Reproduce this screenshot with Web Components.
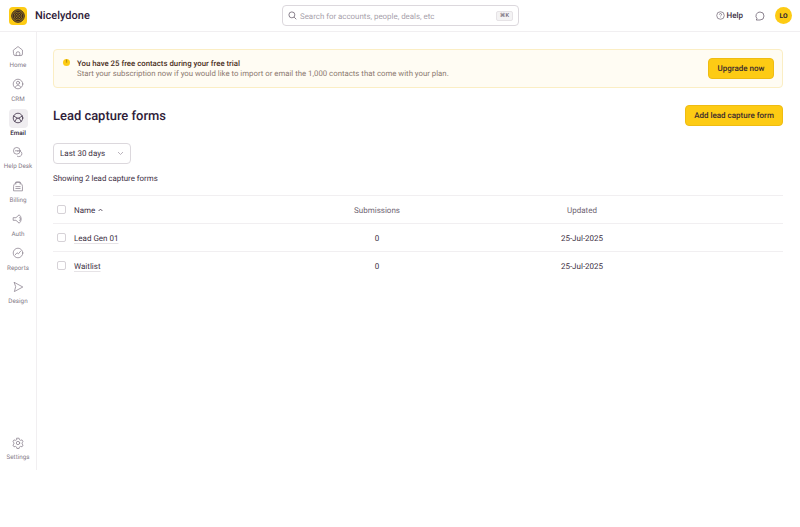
<!DOCTYPE html>
<html>
<head>
<meta charset="utf-8">
<title>Lead capture forms</title>
<style>
  html, body { margin: 0; height: 100%; background: #fff; }
  body { font-family: Roboto, "Liberation Sans", sans-serif; color: #2a1a33; text-rendering: geometricPrecision; }
  .count { margin: 8px 0 0; font-size: 7.9px; line-height: 14px; color: #3d3044; }
</style>
</head>
<body>
<app-shell>
  <top-bar slot="top"></top-bar>
  <side-nav slot="side">
    <nav-item label="Home" icon="home"></nav-item>
    <nav-item label="CRM" icon="crm"></nav-item>
    <nav-item label="Email" icon="email" active></nav-item>
    <nav-item label="Help Desk" icon="help"></nav-item>
    <nav-item label="Billing" icon="billing"></nav-item>
    <nav-item label="Auth" icon="auth"></nav-item>
    <nav-item label="Reports" icon="reports"></nav-item>
    <nav-item label="Design" icon="design"></nav-item>
    <nav-item slot="bottom" label="Settings" icon="settings"></nav-item>
  </side-nav>
  <trial-banner></trial-banner>
  <page-head></page-head>
  <range-select></range-select>
  <p class="count">Showing 2 lead capture forms</p>
  <forms-table>
    <form-row name="Lead Gen 01" count="0" updated="25-Jul-2025"></form-row>
    <form-row name="Waitlist" count="0" updated="25-Jul-2025"></form-row>
  </forms-table>
</app-shell>

<script>
const ICONS = {
  home: '<path d="M2.6 8.4 10 2.6l7.4 5.8V15a2.6 2.6 0 0 1-2.6 2.6H5.2A2.6 2.6 0 0 1 2.6 15z"/><path d="M7 17.4v-3.2a3 3 0 0 1 6 0v3.2"/>',
  crm: '<circle cx="10" cy="10" r="8"/><circle cx="10" cy="8" r="2.6"/><path d="M5.8 15.4c.6-2.4 2.2-3.2 4.2-3.2s3.6.8 4.2 3.2"/>',
  email: '<circle cx="10" cy="10" r="8"/><path d="M3 6.8 10 11l7-4.2M4.6 15.8 8.4 10M15.4 15.8 11.6 10"/>',
  help: '<circle cx="8" cy="8" r="5.6"/><path d="M9 17.2a5 5 0 1 0 .2-8.8"/><path d="M5.6 8h4.6"/>',
  billing: '<path d="M2.6 17.4V11a7.4 7.4 0 0 1 14.8 0v6.4z"/><path d="M6.4 7V3.4h7.2V7M6.4 11h7.2M6.4 14.2h7.2"/>',
  auth: '<path d="M2.6 7.8h4L12 3a9 9 0 0 1 0 14l-5.4-4.8h-4z"/><path d="M13 7a4.4 4.4 0 0 1 0 6"/>',
  reports: '<circle cx="10" cy="10" r="8"/><path d="M5.6 12.8 8.4 9.6l2.2 1.8 3.8-4.4"/>',
  design: '<path d="M4 2.4 18 10 4 17.6l2-7.6z"/>',
  settings: '<circle cx="10" cy="10" r="2.8"/><path d="M8.2 2h3.6l.5 2.4 2 1.2 2.4-.8 1.8 3.1-1.8 1.6v2.2l1.8 1.6-1.8 3.1-2.4-.8-2 1.2-.5 2.4H8.2l-.5-2.4-2-1.2-2.4.8-1.8-3.1 1.8-1.6V9.5L1.5 7.9l1.8-3.1 2.4.8 2-1.2z"/>'
};

class AppShell extends HTMLElement {
  constructor() {
    super();
    this.attachShadow({ mode: 'open' });
    this.shadowRoot.innerHTML = `
      <style>
        :host { display: block; height: 470px; }
        .wrap { display: grid; grid-template-rows: 32px 1fr; grid-template-columns: 37px 1fr; height: 100%; }
        .top { grid-column: 1 / 3; }
        main { padding: 17px 17px 0 16px; min-width: 0; }
      </style>
      <div class="wrap">
        <div class="top"><slot name="top"></slot></div>
        <slot name="side"></slot>
        <main><slot></slot></main>
      </div>
    `;
  }
}

class TopBar extends HTMLElement {
  constructor() {
    super();
    this.attachShadow({ mode: 'open' });
    this.shadowRoot.innerHTML = `
      <style>
        :host { display: grid; grid-template-columns: 273px 237px 1fr; align-items: center; height: 32px; box-sizing: border-box;
                border-bottom: 1px solid #f1eff1; padding: 0 8px 0 9px; }
        .brand { display: flex; align-items: center; gap: 8px; font-size: 11px; font-weight: 500; color: #2f2038; }
        .logo { width: 18px; height: 18px; border-radius: 4px; background: #fdcb14; display: flex; align-items: center; justify-content: center; }
        .search { height: 21px; box-sizing: border-box; border: 1px solid #dcd8dd; border-radius: 4px; display: flex; align-items: center;
                  padding: 0 5px 0 5px; gap: 3px; color: #a89fab; font-size: 7.9px; }
        .search span { flex: 1; padding-top: 1px; }
        kbd { font-family: inherit; font-size: 5.6px; font-weight: 500; line-height: 8px; color: #6f6573; background: #f4f3f4; border: 1px solid #e6e3e6; border-radius: 2px; padding: 0 3px; }
        .right { display: flex; justify-content: flex-end; align-items: center; font-size: 8px; font-weight: 500; color: #3d3044; }
        .help { display: flex; align-items: center; gap: 2px; margin-right: 12px; }
        .chat { margin-right: 10px; display: flex; }
        .avatar { width: 17px; height: 17px; border-radius: 50%; background: #fdcb14; display: flex; align-items: center; justify-content: center;
                  font-size: 6.6px; font-weight: 700; color: #2a1a33; }
        svg { fill: none; stroke: currentColor; }
      </style>
      <div class="brand">
        <div class="logo">
          <svg width="14" height="14" viewBox="0 0 14 14" style="stroke:#2a1a24">
            <circle cx="7" cy="7" r="6.3" stroke-width=".9" fill="#9a7a1e"/>
            <circle cx="7" cy="7" r="4.7" stroke-width=".9"/>
            <circle cx="7" cy="7" r="3.1" stroke-width=".9"/>
            <circle cx="7" cy="7" r="1.4" stroke-width=".9"/>
          </svg>
        </div>
        <span>Nicelydone</span>
      </div>
      <div class="search">
        <svg width="9" height="9" viewBox="0 0 10 10" stroke-width="1" style="color:#7d7480"><circle cx="4.3" cy="4.3" r="3.3"/><path d="m6.8 6.8 2.4 2.4"/></svg>
        <span>Search for accounts, people, deals, etc</span>
        <kbd>⌘K</kbd>
      </div>
      <div class="right">
        <div class="help">
          <svg width="9" height="9" viewBox="0 0 10 10" stroke-width=".8" style="color:#6f6573"><circle cx="5" cy="5" r="4.2"/><path d="M3.8 4a1.2 1.2 0 1 1 1.7 1.1c-.4.2-.5.4-.5.8M5 7.2v.3"/></svg>
          <span>Help</span>
        </div>
        <div class="chat">
          <svg width="10" height="10" viewBox="0 0 10 10" stroke-width=".8" style="color:#6f6573"><path d="M5 1a4 4 0 0 1 0 8H1.2l.8-1.3A4 4 0 0 1 5 1z"/></svg>
        </div>
        <div class="avatar">LO</div>
      </div>
    `;
  }
}

class SideNav extends HTMLElement {
  constructor() {
    super();
    this.attachShadow({ mode: 'open' });
    this.shadowRoot.innerHTML = `
      <style>
        :host { display: flex; flex-direction: column; justify-content: space-between; box-sizing: border-box; width: 37px;
                border-right: 1px solid #f1eff1; padding: 9px 0 7px; }
        div { display: flex; flex-direction: column; gap: 4px; align-items: center; }
      </style>
      <div><slot></slot></div>
      <div><slot name="bottom"></slot></div>
    `;
  }
}

class NavItem extends HTMLElement {
  constructor() {
    super();
    this.attachShadow({ mode: 'open' });
    const active = this.hasAttribute('active');
    this.shadowRoot.innerHTML = `
      <style>
        :host { display: flex; flex-direction: column; align-items: center; width: 36px; height: 29.75px; }
        .ic { width: 19px; height: 19px; flex: none; border-radius: 4px; display: flex; align-items: center; justify-content: center;
              color: #857b88; background: ${active ? '#efedf0' : 'transparent'}; }
        .ic.on { color: #2a1a33; }
        svg { fill: none; stroke: currentColor; stroke-width: 1.2; stroke-linejoin: round; stroke-linecap: round; }
        span { font-size: 6.3px; line-height: 9px; margin-top: 1px; white-space: nowrap; font-weight: ${active ? 500 : 400}; color: ${active ? '#2a1a33' : '#857b88'}; }
      </style>
      <div class="ic ${active ? 'on' : ''}"><svg width="12" height="12" viewBox="0 0 20 20">${ICONS[this.getAttribute('icon')]}</svg></div>
      <span>${this.getAttribute('label')}</span>
    `;
  }
}

class TrialBanner extends HTMLElement {
  constructor() {
    super();
    this.attachShadow({ mode: 'open' });
    this.shadowRoot.innerHTML = `
      <style>
        :host { display: flex; align-items: center; box-sizing: border-box; height: 39px; background: #fffcf3; border: 1px solid #fbeec4;
                border-radius: 4px; padding: 0 8px 0 9px; }
        .dot { width: 7px; height: 7px; border-radius: 50%; background: #fdcb14; align-self: flex-start; margin-top: 9px; margin-right: 4px;
               color: #8a6a00; font-size: 5px; line-height: 7px; text-align: center; font-weight: 700; }
        .txt { flex: 1; margin-left: 3px; padding-top: 1px; font-size: 7.8px; line-height: 10.5px; }
        b { display: block; font-weight: 500; color: #4a2f1d; }
        span { color: #8c7a70; }
        button { font-family: inherit; font-size: 8px; font-weight: 500; color: #3a2a2e; background: #fdcb14; border: 1px solid #efbc12; border-radius: 4px;
                 width: 66px; height: 21px; padding: 0; text-rendering: geometricPrecision; }
      </style>
      <div class="dot">!</div>
      <div class="txt">
        <b>You have 25 free contacts during your free trial</b>
        <span>Start your subscription now if you would like to import or email the 1,000 contacts that come with your plan.</span>
      </div>
      <button>Upgrade now</button>
    `;
  }
}

class PageHead extends HTMLElement {
  constructor() {
    super();
    this.attachShadow({ mode: 'open' });
    this.shadowRoot.innerHTML = `
      <style>
        :host { display: flex; justify-content: space-between; align-items: center; margin-top: 17px; height: 21px; }
        h1 { margin: 0; padding-top: 1px; font-size: 12.95px; font-weight: 500; color: #2f2038; }
        button { font-family: inherit; font-size: 8px; font-weight: 500; color: #3a2a2e; background: #fdcb14; border: 1px solid #efbc12; border-radius: 4px;
                 width: 98px; height: 21px; padding: 0; text-rendering: geometricPrecision; }
      </style>
      <h1>Lead capture forms</h1>
      <button>Add lead capture form</button>
    `;
  }
}

class RangeSelect extends HTMLElement {
  constructor() {
    super();
    this.attachShadow({ mode: 'open' });
    this.shadowRoot.innerHTML = `
      <style>
        :host { display: flex; align-items: center; justify-content: space-between; box-sizing: border-box; width: 78px; height: 21px;
                margin-top: 17px; border: 1px solid #dcd8dd; border-radius: 4px; padding: 0 6px; font-size: 8px; color: #3d3044; }
        svg { fill: none; stroke: #a89fab; stroke-width: .8; }
      </style>
      <span>Last 30 days</span>
      <svg width="7" height="5" viewBox="0 0 7 5"><path d="m1 1 2.5 2.5L6 1"/></svg>
    `;
  }
}

class FormsTable extends HTMLElement {
  constructor() {
    super();
    this.attachShadow({ mode: 'open' });
    this.shadowRoot.innerHTML = `
      <style>
        :host { display: block; margin-top: 9px; font-size: 8px; }
        .row { display: grid; grid-template-columns: 21px 200px 206px 204px; align-items: center; height: 27px;
               border-top: 1px solid #f1eff1; color: #6f6573; }
        i { width: 7px; height: 7px; border: 1px solid #d6d2d7; border-radius: 2px; margin-left: 4px; }
        span { padding-top: 1px; }
        .name { color: #3d3044; }
        .c { text-align: center; }
        svg { fill: none; stroke: #3d3044; stroke-width: .8; margin-left: 1px; vertical-align: 1px; }
      </style>
      <div class="row">
        <i></i>
        <span class="name">Name <svg width="5" height="4" viewBox="0 0 5 4"><path d="m.6 3 1.9-1.9L4.4 3"/></svg></span>
        <span class="c">Submissions</span>
        <span class="c">Updated</span>
      </div>
      <slot></slot>
    `;
  }
}

class FormRow extends HTMLElement {
  constructor() {
    super();
    this.attachShadow({ mode: 'open' });
    this.shadowRoot.innerHTML = `
      <style>
        :host { display: grid; grid-template-columns: 21px 200px 206px 204px; align-items: center; height: 27px;
                border-top: 1px solid #f1eff1; color: #3d3044; }
        i { width: 7px; height: 7px; border: 1px solid #d6d2d7; border-radius: 2px; margin-left: 4px; }
        a, span { padding-top: 1px; }
        a { text-decoration: underline; text-decoration-color: #e6e3e6; text-underline-offset: 2px; justify-self: start; }
        .c { text-align: center; }
      </style>
      <i></i>
      <a>${this.getAttribute('name')}</a>
      <span class="c">${this.getAttribute('count')}</span>
      <span class="c">${this.getAttribute('updated')}</span>
    `;
  }
}

customElements.define('app-shell', AppShell);
customElements.define('top-bar', TopBar);
customElements.define('side-nav', SideNav);
customElements.define('nav-item', NavItem);
customElements.define('trial-banner', TrialBanner);
customElements.define('page-head', PageHead);
customElements.define('range-select', RangeSelect);
customElements.define('forms-table', FormsTable);
customElements.define('form-row', FormRow);
</script>
</body>
</html>
